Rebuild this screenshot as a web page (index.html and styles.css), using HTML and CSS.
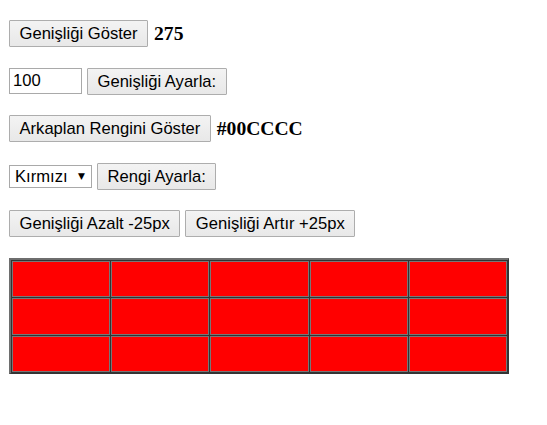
FILE: index.html
```html
<!DOCTYPE html>
<html lang="tr">
<head>
<meta charset="utf-8">
<title>Genişlik</title>
<link rel="stylesheet" href="styles.css">
</head>
<body>
<div class="page">
  <div class="row">
    <button class="btn" type="button">Genişliği Göster</button>
    <span class="out">275</span>
  </div>
  <div class="row">
    <input class="field" type="text" value="100">
    <button class="btn" type="button">Genişliği Ayarla:</button>
  </div>
  <div class="row">
    <button class="btn" type="button">Arkaplan Rengini Göster</button>
    <span class="out">#00CCCC</span>
  </div>
  <div class="row">
    <span class="select">
      <select class="select-native">
        <option>Kırmızı</option>
        <option>Yeşil</option>
        <option>Mavi</option>
      </select>
      <span class="arrow">▼</span>
    </span>
    <button class="btn" type="button">Rengi Ayarla:</button>
  </div>
  <div class="row">
    <button class="btn" type="button">Genişliği Azalt -25px</button>
    <button class="btn" type="button">Genişliği Artır +25px</button>
  </div>
  <table class="grid">
    <tr><td></td><td></td><td></td><td></td><td></td></tr>
    <tr><td></td><td></td><td></td><td></td><td></td></tr>
    <tr><td></td><td></td><td></td><td></td><td></td></tr>
  </table>
</div>
</body>
</html>
```

FILE: styles.css
```css
html, body {
  margin: 0;
  padding: 0;
  background: #ffffff;
}

.page {
  display: flex;
  flex-direction: column;
  align-items: flex-start;
  gap: 20.5px;
  padding: 20px 9px;
  font-family: "Liberation Sans", Arial, sans-serif;
}

.row {
  display: flex;
  align-items: center;
  gap: 5px;
  height: 27px;
}

.btn {
  font-family: "Liberation Sans", Arial, sans-serif;
  font-size: 16.6px;
  line-height: 19px;
  color: #000;
  background: linear-gradient(#f3f3f3, #e8e8e8);
  border: 1px solid #adadad;
  border-radius: 1px;
  padding: 3px 9.5px;
  height: 27px;
  margin: 0;
  white-space: nowrap;
}

.out {
  font-family: "Liberation Serif", "Times New Roman", serif;
  font-weight: bold;
  font-size: 19.6px;
  margin-left: 1px;
  color: #000;
}

.field {
  box-sizing: border-box;
  width: 73px;
  height: 26px;
  margin: 0;
  padding: 1px 3px;
  border: 1px solid #a9a9a9;
  font-family: "Liberation Sans", Arial, sans-serif;
  font-size: 16.6px;
  color: #000;
  outline: none;
}

.select {
  box-sizing: border-box;
  display: inline-flex;
  align-items: center;
  width: 83px;
  height: 23px;
  border: 1px solid #a9a9a9;
  background: #fff;
  padding: 0 6px 0 5px;
}

.select-native {
  appearance: none;
  -webkit-appearance: none;
  border: 0;
  background: transparent;
  padding: 0;
  margin: 0;
  flex: 1;
  min-width: 0;
  font-family: "Liberation Sans", Arial, sans-serif;
  font-size: 16.6px;
  color: #000;
  outline: none;
}

.arrow {
  font-family: "DejaVu Sans", sans-serif;
  font-size: 9px;
  color: #000;
}

.grid {
  width: 500px;
  height: 116px;
  border-collapse: separate;
  border-spacing: 1px;
  background: #333333;
  border-style: solid;
  border-width: 2px 1px 1px 2px;
  border-color: #6e6e6e #333333 #333333 #6e6e6e;
  margin-top: 0.5px;
}

.grid td {
  background: #ff0000;
  border: 1px solid #777777;
  padding: 0;
}
```
